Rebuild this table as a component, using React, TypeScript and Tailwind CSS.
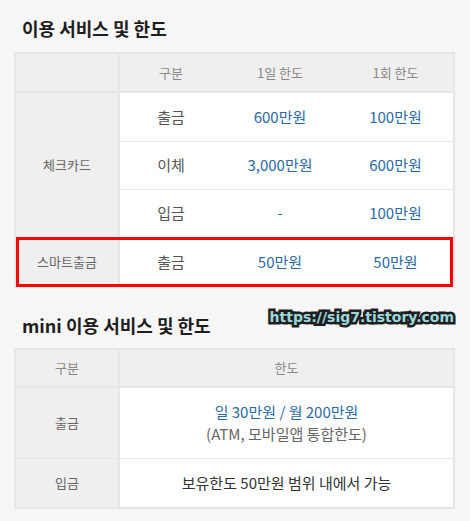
import React from "react";

const font = "font-['Noto_Sans_CJK_KR','Noto_Sans',sans-serif]";

const head = "flex items-center justify-center bg-[#efefef] text-[13px] text-[#888]";
const body = "flex items-center justify-center bg-white text-[15px]";
const blue = "text-[#2a6aa6]";

export default function App() {
  return (
    <div className={`w-[470px] h-[521px] bg-[#f6f6f6] ${font} overflow-hidden`}>
      <div className="px-[14px] pt-[16px]">
        <h2 className="pl-[8px] h-[24px] leading-[24px] text-[18px] font-bold text-[#1e1e1e]">
          이용 서비스 및 한도
        </h2>

        <div className="relative mt-[12px] w-[441px] border-2 border-[#e6e6e6]">
          <div className="grid grid-cols-[104px_102px_116px_115px] grid-rows-[39px_49px_48px_48px_48px]">
            <div className={`${head} border-b-2 border-r-2 border-[#e6e6e6]`} />
            <div className={`${head} border-b-2 border-[#e6e6e6]`}>구분</div>
            <div className={`${head} border-b-2 border-[#e6e6e6]`}>1일 한도</div>
            <div className={`${head} border-b-2 border-[#e6e6e6]`}>1회 한도</div>

            <div className="row-span-3 flex items-center justify-center bg-[#efefef] text-[13px] text-[#666] border-r-2 border-b border-[#e6e6e6]">
              체크카드
            </div>
            <div className={`${body} text-[#555] border-b border-[#e6e6e6]`}>출금</div>
            <div className={`${body} ${blue} border-b border-[#e6e6e6]`}>600만원</div>
            <div className={`${body} ${blue} border-b border-[#e6e6e6]`}>100만원</div>

            <div className={`${body} text-[#555] border-b border-[#e6e6e6]`}>이체</div>
            <div className={`${body} ${blue} border-b border-[#e6e6e6]`}>3,000만원</div>
            <div className={`${body} ${blue} border-b border-[#e6e6e6]`}>600만원</div>

            <div className={`${body} text-[#555] border-b border-[#e6e6e6]`}>입금</div>
            <div className={`${body} ${blue} border-b border-[#e6e6e6]`}>-</div>
            <div className={`${body} ${blue} border-b border-[#e6e6e6]`}>100만원</div>

            <div className="flex items-center justify-center bg-[#efefef] text-[13px] text-[#666] border-r-2 border-[#e6e6e6]">
              스마트출금
            </div>
            <div className={`${body} text-[#555]`}>출금</div>
            <div className={`${body} ${blue}`}>50만원</div>
            <div className={`${body} ${blue}`}>50만원</div>
          </div>
          <div className="pointer-events-none absolute left-0 right-0 bottom-[-1px] h-[50px] border-[3px] border-[#ff0000]" />
        </div>

        <div className="relative mt-[25px] h-[24px]">
          <h2 className="pl-[8px] leading-[24px] text-[18px] font-bold text-[#1e1e1e]">
            mini 이용 서비스 및 한도
          </h2>
          <div className="absolute right-[2px] top-[-5px] font-['DejaVu_Sans',sans-serif] font-bold text-[14px] leading-[18px] text-[#9ad8dc] [-webkit-text-stroke:5px_#1f1f1f] [paint-order:stroke_fill]">
            https://sig7.tistory.com
          </div>
        </div>

        <div className="mt-[11px] w-[441px] border-2 border-[#e6e6e6]">
          <div className="grid grid-cols-[104px_333px] grid-rows-[38px_71px_48px]">
            <div className={`${head} border-b-2 border-r-2 border-[#e6e6e6]`}>구분</div>
            <div className={`${head} border-b-2 border-[#e6e6e6]`}>한도</div>

            <div className="flex items-center justify-center bg-[#efefef] text-[13px] text-[#666] border-r-2 border-b border-[#e6e6e6]">
              출금
            </div>
            <div className="flex flex-col items-center justify-center bg-white text-[15px] leading-[22px] border-b border-[#e6e6e6]">
              <span className={blue}>일 30만원 / 월 200만원</span>
              <span className="text-[#666]">(ATM, 모바일앱 통합한도)</span>
            </div>

            <div className="flex items-center justify-center bg-[#efefef] text-[13px] text-[#666] border-r-2 border-[#e6e6e6]">
              입금
            </div>
            <div className={`${body} text-[#333]`}>보유한도 50만원 범위 내에서 가능</div>
          </div>
        </div>
      </div>
    </div>
  );
}
